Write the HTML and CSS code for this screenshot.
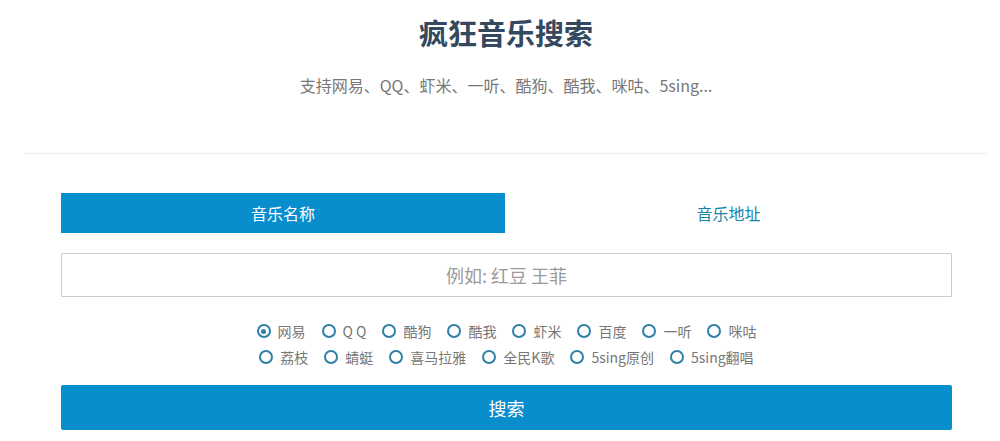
FILE: index.html
```html
<!DOCTYPE html>
<html lang="zh-CN">
<head>
<meta charset="utf-8">
<title>疯狂音乐搜索</title>
<link rel="stylesheet" href="styles.css">
</head>
<body>
<header class="header">
  <h1 class="title">疯狂音乐搜索</h1>
  <p class="subtitle">支持网易、QQ、虾米、一听、酷狗、酷我、咪咕、5sing...</p>
</header>
<main class="main">
  <div class="tabs">
    <div class="tab tab-active">音乐名称</div>
    <div class="tab">音乐地址</div>
  </div>
  <input class="search-input" type="text" placeholder="例如: 红豆 王菲">
  <div class="sources">
    <div class="row">
      <label class="opt"><span class="radio checked"></span><span class="lbl">网易</span></label>
      <label class="opt"><span class="radio"></span><span class="lbl">Q Q</span></label>
      <label class="opt"><span class="radio"></span><span class="lbl">酷狗</span></label>
      <label class="opt"><span class="radio"></span><span class="lbl">酷我</span></label>
      <label class="opt"><span class="radio"></span><span class="lbl">虾米</span></label>
      <label class="opt"><span class="radio"></span><span class="lbl">百度</span></label>
      <label class="opt"><span class="radio"></span><span class="lbl">一听</span></label>
      <label class="opt"><span class="radio"></span><span class="lbl">咪咕</span></label>
    </div>
    <div class="row">
      <label class="opt"><span class="radio"></span><span class="lbl">荔枝</span></label>
      <label class="opt"><span class="radio"></span><span class="lbl">蜻蜓</span></label>
      <label class="opt"><span class="radio"></span><span class="lbl">喜马拉雅</span></label>
      <label class="opt"><span class="radio"></span><span class="lbl">全民K歌</span></label>
      <label class="opt"><span class="radio"></span><span class="lbl">5sing原创</span></label>
      <label class="opt"><span class="radio"></span><span class="lbl">5sing翻唱</span></label>
    </div>
  </div>
  <button class="search-btn" type="button">搜索</button>
</main>
</body>
</html>
```

FILE: styles.css
```css
* { box-sizing: border-box; }
html, body { margin: 0; padding: 0; background: #fff; }
body {
  font-family: "Noto Sans CJK SC", "Microsoft YaHei", sans-serif;
  color: #555;
}
.header {
  margin: 0 12px 0 24px;
  padding: 14px 0 57px;
  border-bottom: 1px solid #eeeeee;
  text-align: center;
}
.title {
  margin: 0;
  font-size: 29px;
  line-height: 36px;
  font-weight: 700;
  color: #34495e;
}
.subtitle {
  margin: 24px 0 0;
  font-size: 16px;
  line-height: 22px;
  color: #777;
}
.main {
  width: 891px;
  margin: 39px 0 0 61px;
}
.tabs {
  display: flex;
  height: 40px;
}
.tab {
  flex: 1;
  display: flex;
  align-items: center;
  justify-content: center;
  font-size: 16px;
  color: #1686a8;
}
.tab-active {
  flex: 0 0 444px;
  background: #088dcd;
  color: #fff;
}
.search-input {
  display: block;
  width: 100%;
  height: 44px;
  margin-top: 20px;
  border: 1px solid #cccccc;
  border-radius: 1px;
  text-align: center;
  font-family: inherit;
  font-size: 18px;
  color: #555;
  outline: none;
}
.search-input::placeholder { color: #9a9a9a; }
.sources {
  margin-top: 21px;
}
.row {
  display: flex;
  justify-content: center;
  height: 26px;
  align-items: center;
}
.opt {
  display: flex;
  align-items: center;
  margin: 0 8px;
}
.radio {
  width: 14px;
  height: 14px;
  border: 2.5px solid #2f7fa7;
  border-radius: 50%;
  display: flex;
  align-items: center;
  justify-content: center;
  margin-right: 7px;
}
.radio.checked::after {
  content: "";
  width: 5px;
  height: 5px;
  border-radius: 50%;
  background: #2f7fa7;
}
.lbl {
  font-size: 14px;
  line-height: 20px;
  color: #777;
}
.search-btn {
  display: block;
  width: 100%;
  height: 45px;
  margin-top: 15px;
  border: none;
  border-radius: 2px;
  background: #088dcd;
  color: #fff;
  font-family: inherit;
  font-size: 18px;
}
```
